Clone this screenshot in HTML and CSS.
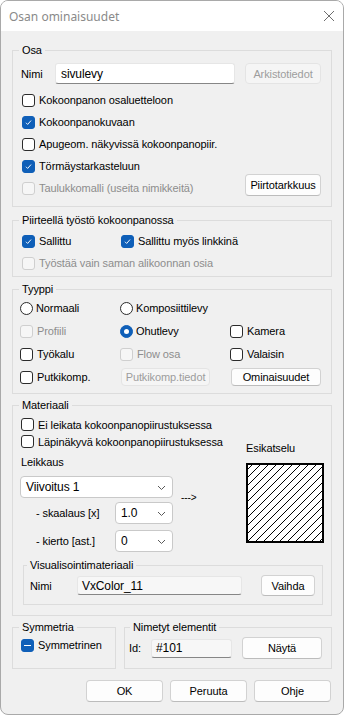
FILE: index.html
```html
<!DOCTYPE html>
<html lang="fi">
<head>
  <meta charset="UTF-8">
  <title>Osan ominaisuudet</title>
  <link rel="stylesheet" href="styles.css">
</head>
<body>
<div class="window">
  <div class="titlebar">
    <span class="title">Osan ominaisuudet</span>
    <svg class="close" width="12" height="12" viewBox="0 0 12 12"><path d="M1 1L11 11M11 1L1 11" stroke="#6e6e6e" stroke-width="1"/></svg>
  </div>

  <div class="content">
    <!-- Osa -->
    <fieldset class="group g-osa">
      <legend>Osa</legend>
      <div class="name-row">
        <span class="lbl">Nimi</span>
        <div class="field">sivulevy</div>
        <button class="btn" disabled>Arkistotiedot</button>
      </div>
      <label class="cb"><span class="box"></span>Kokoonpanon osaluetteloon</label>
      <label class="cb"><span class="box on"><svg viewBox="0 0 13 13"><path d="M3.5 6.8l2 2 4-4.6"/></svg></span>Kokoonpanokuvaan</label>
      <label class="cb"><span class="box"></span>Apugeom. näkyvissä kokoonpanopiir.</label>
      <label class="cb"><span class="box on"><svg viewBox="0 0 13 13"><path d="M3.5 6.8l2 2 4-4.6"/></svg></span>Törmäystarkasteluun</label>
      <div class="cb last-row">
        <label class="cb dis"><span class="box"></span>Taulukkomalli (useita nimikkeitä)</label>
        <button class="btn btn-draw">Piirtotarkkuus</button>
      </div>
    </fieldset>

    <!-- Piirteellä työstö -->
    <fieldset class="group g-work">
      <legend>Piirteellä työstö kokoonpanossa</legend>
      <div class="work-grid">
        <label class="cb"><span class="box on"><svg viewBox="0 0 13 13"><path d="M3.5 6.8l2 2 4-4.6"/></svg></span>Sallittu</label>
        <label class="cb"><span class="box on"><svg viewBox="0 0 13 13"><path d="M3.5 6.8l2 2 4-4.6"/></svg></span>Sallittu myös linkkinä</label>
        <label class="cb dis span2"><span class="box"></span>Työstää vain saman alikoonnan osia</label>
      </div>
    </fieldset>

    <!-- Tyyppi -->
    <fieldset class="group g-type">
      <legend>Tyyppi</legend>
      <div class="type-grid">
        <label class="cb rb"><span class="radio"></span>Normaali</label>
        <label class="cb rb"><span class="radio"></span>Komposiittilevy</label>
        <span></span>
        <label class="cb dis"><span class="box"></span>Profiili</label>
        <label class="cb rb"><span class="radio on"></span>Ohutlevy</label>
        <label class="cb"><span class="box"></span>Kamera</label>
        <label class="cb"><span class="box"></span>Työkalu</label>
        <label class="cb dis"><span class="box"></span>Flow osa</label>
        <label class="cb"><span class="box"></span>Valaisin</label>
        <label class="cb"><span class="box"></span>Putkikomp.</label>
        <div class="cell"><button class="btn btn-pipe" disabled>Putkikomp.tiedot</button></div>
        <div class="cell"><button class="btn btn-props">Ominaisuudet</button></div>
      </div>
    </fieldset>

    <!-- Materiaali -->
    <fieldset class="group g-mat">
      <legend>Materiaali</legend>
      <div class="mat-main">
        <div class="mat-left">
          <label class="cb small"><span class="box"></span>Ei leikata kokoonpanopiirustuksessa</label>
          <label class="cb small"><span class="box"></span>Läpinäkyvä kokoonpanopiirustuksessa</label>
          <div class="cut-label">Leikkaus</div>
          <div class="sel-row">
            <div class="select sel-wide">Viivoitus 1<svg viewBox="0 0 9 6"><path d="M1 1L4.5 4.5L8 1"/></svg></div>
            <span class="arrow">---&gt;</span>
          </div>
          <div class="param-row first">
            <span class="param">- skaalaus [x]</span>
            <div class="select sel-small">1.0<svg viewBox="0 0 9 6"><path d="M1 1L4.5 4.5L8 1"/></svg></div>
          </div>
          <div class="param-row">
            <span class="param">- kierto [ast.]</span>
            <div class="select sel-small">0<svg viewBox="0 0 9 6"><path d="M1 1L4.5 4.5L8 1"/></svg></div>
          </div>
        </div>
        <div class="mat-right">
          <div class="preview-label">Esikatselu</div>
          <svg class="preview" width="78" height="80" viewBox="0 0 78 80">
            <defs>
              <pattern id="hatch" width="8" height="8" patternUnits="userSpaceOnUse">
                <path d="M-2 2L2 -2M0 8L8 0M6 10L10 6" stroke="#000" stroke-width="1"/>
              </pattern>
            </defs>
            <rect x="0" y="0" width="78" height="80" fill="#fff"/>
            <rect x="0" y="0" width="78" height="80" fill="url(#hatch)"/>
            <rect x="1" y="1" width="76" height="78" fill="none" stroke="#000" stroke-width="2"/>
          </svg>
        </div>
      </div>

      <fieldset class="group g-vis">
        <legend>Visualisointimateriaali</legend>
        <div class="vis-row">
          <span class="lbl">Nimi</span>
          <div class="field ro">VxColor_11</div>
          <button class="btn">Vaihda</button>
        </div>
      </fieldset>
    </fieldset>

    <div class="bottom-groups">
      <fieldset class="group g-sym">
        <legend>Symmetria</legend>
        <label class="cb"><span class="box mixed"></span>Symmetrinen</label>
      </fieldset>
      <fieldset class="group g-named">
        <legend>Nimetyt elementit</legend>
        <div class="named-row">
          <span class="lbl">Id:</span>
          <div class="field ro">#101</div>
          <button class="btn">Näytä</button>
        </div>
      </fieldset>
    </div>

    <div class="actions">
      <button class="btn">OK</button>
      <button class="btn">Peruuta</button>
      <button class="btn">Ohje</button>
    </div>
  </div>
</div>
</body>
</html>
```

FILE: styles.css
```css
* { box-sizing: border-box; }

body {
  margin: 0;
  background: #fff;
  font-family: "Liberation Sans", Arial, sans-serif;
  font-size: 11px;
  letter-spacing: -0.1px;
  color: #000;
}

.window {
  width: 344px;
  height: 715px;
  background: #f0f0f0;
  border: 1px solid #a9a9a9;
  border-radius: 8px;
  overflow: hidden;
}

.titlebar {
  height: 30px;
  background: #fff;
  display: flex;
  align-items: center;
  justify-content: space-between;
  padding: 0 8px 0 8px;
}

.title {
  font-family: "Noto Sans", "Liberation Sans", sans-serif;
  font-size: 12px;
  letter-spacing: 0;
  color: #8a8a8a;
}

.content {
  padding: 12px 11px 0 11px;
}

/* group boxes */
.group {
  border: 1px solid #dcdcdc;
  margin: 0;
  padding: 0 8px;
  min-width: 0;
}

.group legend {
  padding: 0 3px;
  margin-left: -2px;
  line-height: 14px;
}

/* controls */
.cb {
  display: flex;
  align-items: center;
  height: 22px;
}

.cb.small { height: 17px; }

.cb.dis { color: #8d8d8d; }

.box, .radio {
  width: 13px;
  height: 13px;
  flex: none;
  margin-right: 4px;
  background: #fff;
  border: 1px solid #2b2b2b;
  border-radius: 3px;
}

.radio {
  border-radius: 50%;
  margin-right: 3px;
  position: relative;
}

.box.on, .box.mixed, .radio.on {
  background: #0f5fb8;
  border-color: #0f5fb8;
}

.box svg {
  display: block;
  width: 11px;
  height: 11px;
}

.box svg path {
  fill: none;
  stroke: #fff;
  stroke-width: 1.1;
}

.box.mixed {
  display: flex;
  align-items: center;
  justify-content: center;
}

.box.mixed::after {
  content: "";
  width: 7px;
  height: 1px;
  background: #fff;
}

.radio.on::after {
  content: "";
  position: absolute;
  left: 3px;
  top: 3px;
  width: 5px;
  height: 5px;
  border-radius: 50%;
  background: #fff;
}

.cb.dis .box {
  background: #f6f6f6;
  border-color: #cfcfcf;
}

.lbl { flex: none; }

.field {
  flex: none;
  height: 21px;
  background: #fff;
  border: 1px solid #e6e6e6;
  border-bottom-color: #868686;
  border-radius: 3px;
  padding: 0 5px;
  display: flex;
  align-items: center;
  font-size: 12px;
}

.field.ro {
  height: 19px;
  background: #f7f7f7;
  padding: 0 4px;
}

.btn {
  flex: none;
  font-family: inherit;
  font-size: 11px;
  letter-spacing: -0.1px;
  color: #000;
  background: #fdfdfd;
  border: 1px solid #d2d2d2;
  border-bottom-color: #bcbcbc;
  border-radius: 4px;
  padding: 0;
  height: 21px;
}

.btn:disabled {
  background: #f5f5f5;
  border-color: #e4e4e4;
  color: #9d9d9d;
}

.select {
  height: 22px;
  background: #fff;
  border: 1px solid #c9c9c9;
  border-radius: 4px;
  display: flex;
  align-items: center;
  justify-content: space-between;
  padding: 0 6px 0 5px;
  font-size: 12px;
}

.select svg {
  width: 9px;
  height: 6px;
  margin-top: 2px;
}

.select svg path {
  fill: none;
  stroke: #5a5a5a;
  stroke-width: 1;
}

/* Osa */
.name-row {
  display: flex;
  align-items: center;
  height: 21px;
  margin-top: 6px;
  margin-bottom: 5px;
}

.name-row .lbl { width: 34px; }
.name-row .field { width: 180px; }
.name-row .btn { width: 76px; margin-left: 10px; }

.g-osa > .cb .box { margin-left: 1px; }

.g-osa { padding-bottom: 7px; }

.last-row {
  justify-content: space-between;
}

.last-row .cb .box { margin-left: 1px; }

.btn-draw {
  width: 76px;
  height: 22px;
  margin-top: -6px;
  margin-right: 2px;
}

/* Piirteellä työstö */
.g-work {
  margin-top: 6px;
  padding-top: 3px;
  padding-bottom: 2px;
}

.work-grid {
  display: grid;
  grid-template-columns: 99px 1fr;
}

.work-grid .box { margin-left: 1px; }

.span2 { grid-column: span 2; }

/* Tyyppi */
.g-type {
  margin-top: 5px;
  padding-top: 1px;
  padding-bottom: 5px;
}

.type-grid {
  display: grid;
  grid-template-columns: 100px 110px 1fr;
  grid-auto-rows: 22px;
  row-gap: 1px;
}

.type-grid .cb { margin-left: -1px; }

.cell {
  display: flex;
  align-items: center;
}

.btn-pipe {
  width: 89px;
  height: 18px;
}

.btn-props {
  width: 90px;
  height: 18px;
}

/* Materiaali */
.g-mat {
  margin-top: 4px;
  padding-top: 4px;
  padding-bottom: 10px;
}

.mat-main {
  display: grid;
  grid-template-columns: 225px 77px;
}

.cut-label {
  line-height: 15px;
  margin-top: 5px;
}

.sel-row {
  display: flex;
  margin-top: 6px;
}

.sel-wide { width: 153px; margin-left: -1px; }

.arrow {
  align-self: flex-end;
  margin-left: 8px;
  margin-bottom: -5px;
  font-size: 10px;
}

.param-row {
  display: flex;
  align-items: center;
  margin-top: 6px;
}

.param-row.first { margin-top: 4px; }

.param {
  width: 94px;
  padding-left: 15px;
}

.sel-small { width: 58px; }

.preview-label {
  line-height: 14px;
  margin-top: 25px;
}

.preview {
  display: block;
  margin-top: 8px;
}

.g-vis {
  margin: 6px 0 0 2px;
  padding: 0 6px 8px 6px;
}

.g-vis legend { margin-left: -3px; }

.vis-row {
  display: flex;
  align-items: center;
  height: 21px;
  margin-top: 3px;
}

.vis-row .lbl { width: 47px; }
.vis-row .field { width: 165px; }
.vis-row .btn { width: 54px; margin-left: 19px; }

/* Symmetria / Nimetyt */
.bottom-groups {
  display: flex;
  gap: 8px;
  margin-top: 4px;
}

.g-sym {
  width: 104px;
  padding-bottom: 12px;
}

.g-named {
  width: 208px;
  padding: 0 8px 9px 4px;
}

.g-named legend { margin-left: 1px; }

.named-row {
  display: flex;
  align-items: center;
  height: 22px;
  margin-top: 3px;
}

.named-row .lbl { width: 22px; }
.named-row .field { width: 81px; }
.named-row .btn { width: 80px; height: 22px; margin-left: 10px; }

.actions {
  display: flex;
  justify-content: flex-end;
  gap: 7px;
  margin-top: 11px;
  margin-right: 1px;
}

.actions .btn {
  width: 77px;
  height: 22px;
}
```
